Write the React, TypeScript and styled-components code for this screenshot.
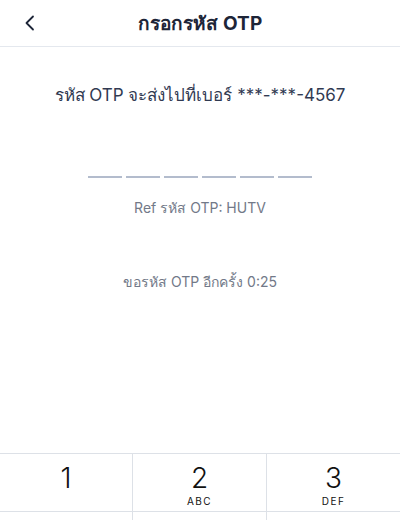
import React from 'react';
import styled, { createGlobalStyle } from 'styled-components';

const GlobalStyle = createGlobalStyle`
  html, body {
    margin: 0;
    padding: 0;
    background: #ffffff;
  }
  body {
    font-family: 'Inter', 'Noto Sans', sans-serif;
    -webkit-font-smoothing: antialiased;
  }
`;

const keys = [
  { num: '1', sub: '' },
  { num: '2', sub: 'ABC' },
  { num: '3', sub: 'DEF' },
];

const App = () => {
  const digits = ['', '', '', '', '', ''];

  return (
    <>
      <GlobalStyle />
      <Screen>
        <Header>
          <BackButton aria-label='back'>
            <svg width='12' height='16' viewBox='0 0 12 16' fill='none'>
              <path d='M9 1.5L2.5 8L9 14.5' stroke='#1d2538' strokeWidth='1.8' strokeLinecap='round' strokeLinejoin='round' />
            </svg>
          </BackButton>
          <Title>กรอกรหัส OTP</Title>
        </Header>
        <Body>
          <Message>รหัส OTP จะส่งไปที่เบอร์ ***-***-4567</Message>
          <OtpRow>
            {digits.map((d, i) => (
              <OtpSlot key={i}>{d}</OtpSlot>
            ))}
          </OtpRow>
          <RefText>Ref รหัส OTP: HUTV</RefText>
          <Resend>ขอรหัส OTP อีกครั้ง 0:25</Resend>
        </Body>
        <Keypad>
          {keys.map((k) => (
            <Key key={k.num}>
              <KeyNum>{k.num}</KeyNum>
              <KeySub>{k.sub}</KeySub>
            </Key>
          ))}
          <Key />
          <Key />
          <Key />
        </Keypad>
      </Screen>
    </>
  );
};

const Screen = styled.div`
  width: 400px;
  height: 520px;
  display: flex;
  flex-direction: column;
  overflow: hidden;
  background: #ffffff;
`;

const Header = styled.div`
  position: relative;
  height: 46px;
  flex-shrink: 0;
  display: flex;
  align-items: center;
  justify-content: center;
  border-bottom: 1px solid #e4e8ee;
`;

const BackButton = styled.button`
  position: absolute;
  left: 20px;
  top: 13px;
  width: 20px;
  height: 20px;
  padding: 0;
  border: none;
  background: transparent;
  display: flex;
  align-items: center;
  justify-content: center;
`;

const Title = styled.div`
  font-size: 19px;
  font-weight: 700;
  color: #1d2538;
  letter-spacing: 0.1px;
`;

const Body = styled.div`
  flex: 1;
  display: flex;
  flex-direction: column;
  align-items: center;
  padding-top: 36px;
`;

const Message = styled.div`
  font-size: 17px;
  color: #313a52;
  line-height: 24px;
`;

const OtpRow = styled.div`
  display: flex;
  gap: 4px;
  margin-top: 69px;
`;

const OtpSlot = styled.div`
  width: 34px;
  height: 0;
  border-bottom: 2px solid #b3bccd;
`;

const RefText = styled.div`
  margin-top: 20px;
  font-size: 14px;
  color: #727988;
  line-height: 20px;
`;

const Resend = styled.div`
  margin-top: 54px;
  font-size: 14px;
  color: #727988;
  line-height: 20px;
`;

const Keypad = styled.div`
  flex-shrink: 0;
  display: grid;
  grid-template-columns: 133px 1fr 133px;
  grid-auto-rows: 58px;
  border-top: 1px solid #dde1e7;
  margin-bottom: -50px;
`;

const Key = styled.div`
  display: flex;
  flex-direction: column;
  align-items: center;
  padding-top: 9px;
  box-sizing: border-box;
  border-bottom: 1px solid #dde1e7;
  border-right: 1px solid #dde1e7;
  &:nth-child(3n) {
    border-right: none;
  }
`;

const KeyNum = styled.div`
  font-size: 28px;
  line-height: 30px;
  font-weight: 300;
  color: #111111;
`;

const KeySub = styled.div`
  font-size: 10px;
  line-height: 12px;
  letter-spacing: 1.5px;
  color: #111111;
  font-weight: 400;
  margin-top: 2px;
`;

export default App;
